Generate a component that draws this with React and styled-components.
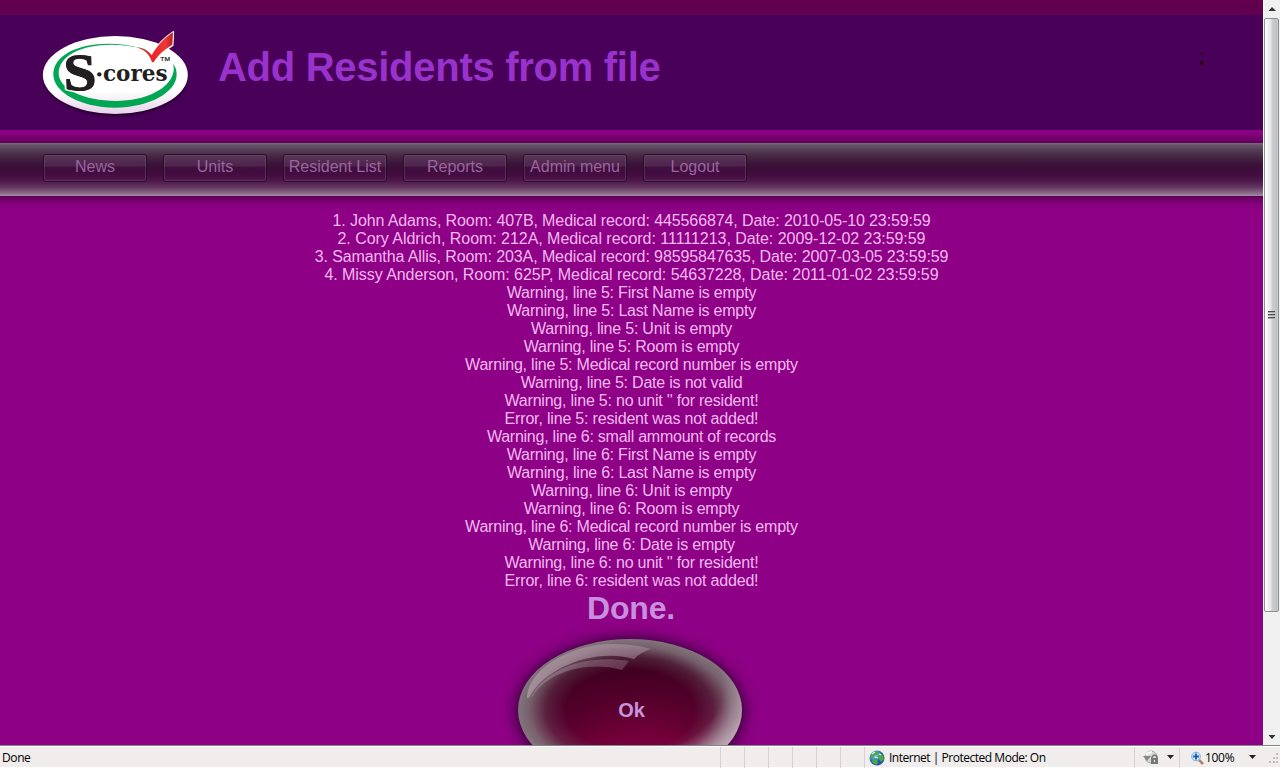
import React from 'react';
import styled, { createGlobalStyle } from 'styled-components';

const Global = createGlobalStyle`
  * { box-sizing: border-box; }
  html, body, #root { height: 100%; }
  body { margin: 0; overflow: hidden; background: #8e0085; font-family: "Liberation Sans", Arial, sans-serif; }
`;
const Window = styled.div`
  display: flex; flex-direction: column; width: 1280px; height: 768px; overflow: hidden;
`;
const Viewport = styled.div` display: flex; height: 745px; flex: none; `;
const Page = styled.main`
  width: 1263px; height: 745px; overflow: hidden; background: #8e0085;
`;
const TopStripe = styled.div` height: 15px; background: #62004f; `;
const Header = styled.header`
  display: flex; align-items: flex-start; height: 115px; padding: 5px 0 0 30px; background: #490058;
`;
const Title = styled.h1`
  margin: 24px 0 0 18px; width: 982px; color: #9932cc; font-size: 40px; line-height: 46px; white-space: nowrap;
  letter-spacing: ${p => p.$spacing};
`;
const Mark = styled.span`
  display: block; width: 3px; height: 13px; margin-top: 33px;
  background: linear-gradient(#24000b 1px, transparent 1px 8px, #24000b 8px 12px, transparent 12px);
`;
const ShadowStrip = styled.div`
  height: ${p => p.$h}px;
  background: ${p => p.$below
    ? 'linear-gradient(#5b0055, #75006e 4px, #87007e 9px, #8e0085)'
    : 'linear-gradient(#8e0085, #87007e 4px, #700069 9px, #5f0058)'};
`;
const NavBar = styled.nav`
  display: flex; gap: 16px; height: 53px; padding: 11px 0 0 43px;
  background: linear-gradient(#7b6b7b 0, #66566a 2px, #553d55 7px, #472943 13px, #3c1239 21px, #3a0d38 26px, #430c40 32px, #4d194b 38px, #62345f 44px, #806080 49px, #a58ca4 53px);
`;
const NavButton = styled.a`
  width: 104px; height: 28px; border: 1px solid #290d2a; border-radius: 3px;
  box-shadow: inset 0 0 0 1px rgba(150,100,150,.22), inset 0 0 3px rgba(150,110,150,.2);
  background: linear-gradient(rgba(120,75,120,.34) 0 11px, rgba(90,30,90,.13) 12px, rgba(80,15,80,.1));
  color: #9b649f; font-size: 16px; line-height: 24px; text-align: center; white-space: nowrap;
`;
const Results = styled.section`
  display: flex; flex-direction: column; align-items: center; padding-top: 1px;
`;
const Line = styled.div`
  height: 18px; line-height: 18px; font-size: 16px; color: #f3b9f1; white-space: nowrap;
  letter-spacing: ${p => p.$spacing}px;
`;
const Done = styled.h2`
  margin: 0 1px 0 0; height: 37px; line-height: 37px; font-size: 32px; color: #c88fdd; letter-spacing: -.2px;
`;
const OkButton = styled.button`
  position: relative; flex: none; width: 224px; height: 142px; margin: 12px 3px 0 0; padding: 0;
  border: 0; border-radius: 50%; background: none;
  box-shadow: 0 1px 13px 3px #38003c;
`;
const OkShape = styled.svg` display: block; `;
const OkLabel = styled.span`
  position: absolute; inset: 59px 0 auto 3px; text-align: center;
  font: bold 20px/24px "Liberation Sans", Arial, sans-serif; color: #c795dc;
`;
const Scrollbar = styled.aside`
  display: flex; flex-direction: column; align-items: center; width: 17px; height: 745px;
  background: #f0f0f0; border-left: 1px solid #fafafa;
`;
const ScrollArrow = styled.svg` display: block; width: 16px; height: 17px; flex: none; `;
const Thumb = styled.div`
  display: flex; align-items: center; justify-content: center; width: 15px; height: 594px; margin: 1px 1px 116px 0;
  border: 1px solid #8f8f8f; border-radius: 2px; flex: none;
  background: linear-gradient(90deg, #fff 0, #f3f3f4 3px, #e4e4e7 6px, #cdced3 7px, #bfc0c6 12px, #d6d6da 13px);
`;
const Grip = styled.i`
  display: block; width: 7px; height: 8px;
  background: repeating-linear-gradient(#4c4c4c 0 1px, #aaa 1px 2px, transparent 2px 3px);
`;
const StatusBar = styled.footer`
  display: flex; height: 23px; flex: none; background: #f0edec; border-top: 1px solid #858585;
  border-bottom: 1px solid #fff; box-shadow: inset 0 1px #fff;
  font: 12px/22px "Open Sans", "Noto Sans", sans-serif; color: #000; white-space: nowrap;
`;
const StatusCell = styled.div`
  display: flex; align-items: center; flex: none; height: 21px; width: ${p => p.$w}px; padding-left: ${p => p.$pad || 0}px;
  margin-top: 1px; border-right: ${p => p.$last ? '0' : '1px solid #d3d3d3'};
`;
const StatusText = styled.span`
  letter-spacing: ${p => p.$spacing || '0'}; margin-left: ${p => p.$left || 0}px; padding-top: 1px;
`;
const Icon = styled.svg` display: block; flex: none; margin-left: ${p => p.$left || 0}px; `;

const messages = [
  ['1. John Adams, Room: 407B, Medical record: 445566874, Date: 2010-05-10 23:59:59', -0.11],
  ['2. Cory Aldrich, Room: 212A, Medical record: 11111213, Date: 2009-12-02 23:59:59', -0.04],
  ['3. Samantha Allis, Room: 203A, Medical record: 98595847635, Date: 2007-03-05 23:59:59', -0.1],
  ['4. Missy Anderson, Room: 625P, Medical record: 54637228, Date: 2011-01-02 23:59:59', -0.065],
  ['Warning, line 5: First Name is empty'], ['Warning, line 5: Last Name is empty'],
  ['Warning, line 5: Unit is empty'], ['Warning, line 5: Room is empty'],
  ['Warning, line 5: Medical record number is empty'], ['Warning, line 5: Date is not valid'],
  ["Warning, line 5: no unit '' for resident!"], ['Error, line 5: resident was not added!', -0.18],
  ['Warning, line 6: small ammount of records', -0.24], ['Warning, line 6: First Name is empty'],
  ['Warning, line 6: Last Name is empty'], ['Warning, line 6: Unit is empty'],
  ['Warning, line 6: Room is empty'], ['Warning, line 6: Medical record number is empty'],
  ['Warning, line 6: Date is empty'], ["Warning, line 6: no unit '' for resident!"],
  ['Error, line 6: resident was not added!', -0.18],
];

function Logo() {
  return (
    <svg width="170" height="110" viewBox="0 0 510 330">
      <defs>
        <linearGradient id="rim" x2="0" y2="1"><stop offset=".7" stopColor="#fff" /><stop offset="1" stopColor="#e6d3ea" /></linearGradient>
        <linearGradient id="red" x2="1" y2="0"><stop stopColor="#a74422" /><stop offset=".4" stopColor="#ee2226" /><stop offset=".8" stopColor="#ec3933" /><stop offset="1" stopColor="#bd1820" /></linearGradient>
        <filter id="soft" x="-10%" y="-10%" width="120%" height="130%"><feGaussianBlur stdDeviation="5" /></filter>
      </defs>
      <ellipse cx="257" cy="174" rx="215" ry="114" fill="#20002a" filter="url(#soft)" />
      <ellipse cx="256" cy="165" rx="217.500" ry="117" fill="url(#rim)" />
      <path d="M342 87C214 48 70 83 70 163c0 55 83 100 185 100s185-45 185-100c0-13-4-23-11-32 3 10 3 18 1 26-10 50-84 86-172 86-95 0-172-36-172-83 0-71 125-107 256-73Z" fill="#00a651" />
      <path d="M318 80c22 1 35 11 47 22 15-24 33-45 65-66l-2 40c-25 15-43 31-56 54l-8-1c-8-25-22-39-46-46Z" fill="#fff" stroke="#fff" strokeWidth="5" strokeLinejoin="round" />
      <path d="M318 82c24 1 37 11 47 24 14-25 35-50 64-69l-2 37c-25 15-44 32-56 53h-5c-8-25-22-38-48-45Z" fill="url(#red)" />
      <g fontFamily="Liberation Serif, serif" fontWeight="700" fontSize="156" transform="translate(102 211) skewX(2)">
        <text textLength="99" lengthAdjust="spacingAndGlyphs" fill="#231f20" stroke="#fff" strokeWidth="12" paintOrder="stroke">S</text>
        <text textLength="99" lengthAdjust="spacingAndGlyphs" fill="#231f20" stroke="#231f20" strokeWidth="3">S</text>
      </g>
      <circle cx="208" cy="163" r="6.500" fill="#231f20" />
      <text x="219" y="182" fontFamily="DejaVu Serif, serif" fontWeight="700" fontSize="64" textLength="194" lengthAdjust="spacingAndGlyphs" fill="#231f20">cores</text>
      <text x="391" y="123" fontFamily="Liberation Sans, sans-serif" fontSize="18" textLength="29" lengthAdjust="spacingAndGlyphs" fill="#231f20" stroke="#231f20" strokeWidth=".7">TM</text>
    </svg>
  );
}

function GlossyOval() {
  return (
    <OkShape width="224" height="142" viewBox="0 0 224 142">
      <defs>
        <radialGradient id="base" cx=".55" cy=".9" r=".78"><stop stopColor="#830042" /><stop offset=".3" stopColor="#720038" /><stop offset=".6" stopColor="#55002b" /><stop offset="1" stopColor="#39001c" /></radialGradient>
        <radialGradient id="edge"><stop offset=".57" stopColor="#81717a" stopOpacity="0" /><stop offset=".75" stopColor="#81717a" stopOpacity=".28" /><stop offset=".9" stopColor="#81717a" stopOpacity=".85" /><stop offset="1" stopColor="#81757c" /></radialGradient>
        <radialGradient id="low" cx=".41" cy=".34" r=".74"><stop offset=".68" stopColor="#d7bccb" stopOpacity="0" /><stop offset="1" stopColor="#ebcfdf" stopOpacity=".95" /></radialGradient>
        <linearGradient id="shine" x2="1"><stop stopColor="#b7a2ad" stopOpacity=".65" /><stop offset="1" stopColor="#b196a5" stopOpacity=".5" /></linearGradient>
      </defs>
      <ellipse cx="112" cy="71" rx="112" ry="71" fill="url(#base)" />
      <ellipse cx="112" cy="71" rx="112" ry="71" fill="url(#edge)" />
      <ellipse cx="112" cy="71" rx="112" ry="71" fill="url(#low)" />
      <path d="M9 59C10 29 55 5 93 5c14 0 27 1 40 5-7 2-12 5-17 10C75 8 25 30 11 59Z" fill="url(#shine)" />
      <path d="M13 58C29 29 68 15 111 22l-7 9C68 21 28 34 14 58Z" fill="url(#shine)" opacity=".65" />
    </OkShape>
  );
}

const Globe = () => (
  <Icon width="16" height="16" viewBox="0 0 16 16" $left={4}>
    <defs><radialGradient id="sea" cx=".35" cy=".3"><stop stopColor="#b4dcf7" /><stop offset=".55" stopColor="#4c91d0" /><stop offset="1" stopColor="#2458a0" /></radialGradient></defs>
    <circle cx="8" cy="8" r="7.500" fill="url(#sea)" />
    <path d="M2 5l4-4 3 1-1 3-3 1-1 2-3-1Zm8-3 4 3 1 4-3 3-2-3-2-2 2-2ZM4 9l4 1 1 3-2 2-4-3Z" fill="#49a944" />
    <path d="M3 4l3-2M6 7l3 1M10 4l2 1" stroke="#d9f2f8" strokeWidth="1.200" />
  </Icon>
);
const Caret = ({ left }) => (
  <Icon width="7" height="6" viewBox="0 0 7 6" $left={left}><path d="M0 0h7L3.500 4Z" fill="#222" /></Icon>
);

export default function App() {
  return (
    <>
      <Global />
      <Window>
        <Viewport>
          <Page>
            <TopStripe />
            <Header><Logo /><Title $spacing="-0.28px">Add Residents from file</Title><Mark /></Header>
            <ShadowStrip $h={13} />
            <NavBar>
              {['News', 'Units', 'Resident List', 'Reports', 'Admin menu', 'Logout'].map(n => <NavButton key={n}>{n}</NavButton>)}
            </NavBar>
            <ShadowStrip $h={15} $below />
            <Results>
              {messages.map(([text, spacing = -0.21]) => <Line key={text} $spacing={spacing}>{text}</Line>)}
              <Done>Done.</Done>
              <OkButton><GlossyOval /><OkLabel>Ok</OkLabel></OkButton>
            </Results>
          </Page>
          <Scrollbar>
            <ScrollArrow viewBox="0 0 16 17"><path d="M4.500 11 8 7l4 4Z" fill="#333" /></ScrollArrow>
            <Thumb><Grip /></Thumb>
            <ScrollArrow viewBox="0 0 16 17"><path d="M4.500 7h7L8 11Z" fill="#333" /></ScrollArrow>
          </Scrollbar>
        </Viewport>
        <StatusBar>
          <StatusCell $w={721} $pad={2}><StatusText $spacing="-0.4px">Done</StatusText></StatusCell>
          {[0, 1, 2, 3, 4, 5].map(i => <StatusCell key={i} $w={24} />)}
          <StatusCell $w={270}>
            <Globe /><StatusText $left={4} $spacing="-0.48px">Internet | Protected Mode: On</StatusText>
          </StatusCell>
          <StatusCell $w={45} $pad={8}>
            <Icon width="17" height="16" viewBox="0 0 17 16">
              <circle cx="8" cy="7" r="6" fill="#d9dad9" stroke="#a5a6a5" />
              <path d="M0 6h8L4 11Z" fill="#858886" /><path d="M3 5q2-3 6-3" fill="none" stroke="#fafafa" strokeWidth="2" />
              <path d="M9 9V7q2.500-4 5 0v2" fill="none" stroke="#777" strokeWidth="1.500" /><path d="M8 8h7v6H8Z" fill="#777" /><path d="M11 10h1v2h-1Z" fill="#eee" />
            </Icon>
            <Caret left={7} />
          </StatusCell>
          <StatusCell $w={100} $pad={11} $last>
            <Icon width="13" height="14" viewBox="0 0 13 14">
              <path d="m8 9 4 4" stroke="#ae8066" strokeWidth="2.500" />
              <circle cx="5" cy="5.500" r="4.300" fill="#dcefff" stroke="#78a4cd" /><path d="M5 2.500v6M2 5.500h6" stroke="#1963bc" strokeWidth="2" />
            </Icon>
            <StatusText $left={1} $spacing="-0.3px">100%</StatusText><Caret left={15} />
            <Icon width="12" height="12" viewBox="0 0 12 12" $left={12}>
              <path d="M8 1h2v2H8ZM5 5h2v2H5Zm3 0h2v2H8ZM1 9h2v2H1Zm4 0h2v2H5Zm3 0h2v2H8Z" fill="#c1bebd" />
            </Icon>
          </StatusCell>
        </StatusBar>
      </Window>
    </>
  );
}
